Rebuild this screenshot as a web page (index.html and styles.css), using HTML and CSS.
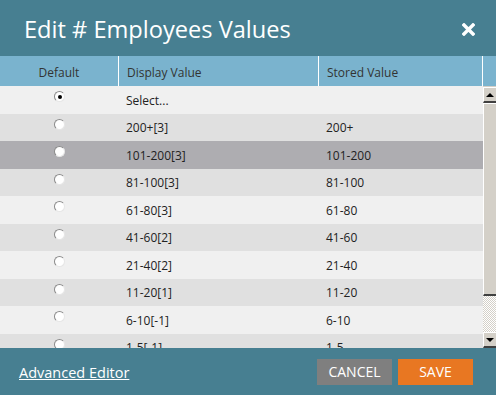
FILE: index.html
```html
<!DOCTYPE html>
<html lang="en">
  <head>
    <meta charset="UTF-8" />
    <title>Edit # Employees Values</title>
    <link rel="stylesheet" href="styles.css">
  </head>
  <body>
    <div class="dialog">
      <!-- title bar -->
      <div class="dialog-head">
        <h1>Edit # Employees Values</h1>
        <span class="close-btn">
          <svg width="13" height="13" viewBox="0 0 13 13">
            <path d="M2 2 L11 11 M11 2 L2 11" stroke="#fff" stroke-width="3.4" stroke-linecap="square" />
          </svg>
        </span>
      </div>

      <!-- column titles -->
      <div class="grid-head">
        <div class="col-default">Default</div>
        <div class="col-display">Display Value</div>
        <div class="col-stored">Stored Value</div>
        <div class="col-pad"></div>
      </div>

      <!-- values -->
      <div class="grid-body">
        <div class="rows">
          <div class="row"><div class="col-default"><span class="radio checked"></span></div><div class="col-display">Select...</div><div class="col-stored"></div></div>
          <div class="row"><div class="col-default"><span class="radio"></span></div><div class="col-display">200+[3]</div><div class="col-stored">200+</div></div>
          <div class="row selected"><div class="col-default"><span class="radio"></span></div><div class="col-display">101-200[3]</div><div class="col-stored">101-200</div></div>
          <div class="row"><div class="col-default"><span class="radio"></span></div><div class="col-display">81-100[3]</div><div class="col-stored">81-100</div></div>
          <div class="row"><div class="col-default"><span class="radio"></span></div><div class="col-display">61-80[3]</div><div class="col-stored">61-80</div></div>
          <div class="row"><div class="col-default"><span class="radio"></span></div><div class="col-display">41-60[2]</div><div class="col-stored">41-60</div></div>
          <div class="row"><div class="col-default"><span class="radio"></span></div><div class="col-display">21-40[2]</div><div class="col-stored">21-40</div></div>
          <div class="row"><div class="col-default"><span class="radio"></span></div><div class="col-display">11-20[1]</div><div class="col-stored">11-20</div></div>
          <div class="row"><div class="col-default"><span class="radio"></span></div><div class="col-display">6-10[-1]</div><div class="col-stored">6-10</div></div>
          <div class="row"><div class="col-default"><span class="radio"></span></div><div class="col-display">1-5[-1]</div><div class="col-stored">1-5</div></div>
        </div>
        <div class="scrollbar">
          <div class="sb-btn sb-up"><span class="arrow-up"></span></div>
          <div class="sb-thumb"></div>
          <div class="sb-track"></div>
          <div class="sb-btn sb-down"><span class="arrow-down"></span></div>
        </div>
      </div>

      <!-- actions -->
      <div class="dialog-foot">
        <a class="adv-link" href="#">Advanced Editor</a>
        <div class="actions">
          <button class="btn btn-cancel">CANCEL</button>
          <button class="btn btn-save">SAVE</button>
        </div>
      </div>
    </div>
  </body>
</html>
```

FILE: styles.css
```css
body {
  margin: 0;
  font-family: "Open Sans", Arial, sans-serif;
  background: #ffffff;
}

.dialog {
  width: 496px;
  height: 395px;
  display: flex;
  flex-direction: column;
  background: #477f91;
  overflow: hidden;
}

/* title bar */
.dialog-head {
  height: 56px;
  flex: none;
  display: flex;
  align-items: center;
  justify-content: space-between;
  padding: 0 21px 0 24px;
  box-sizing: border-box;
}
.dialog-head h1 {
  margin: 0;
  font-size: 23.6px;
  font-weight: normal;
  color: #ffffff;
  position: relative;
  top: 1px;
}
.close-btn {
  display: flex;
  width: 13px;
  height: 13px;
  margin-top: 2px;
}

/* columns */
.col-default {
  width: 118px;
  flex: none;
  display: flex;
  justify-content: center;
  align-items: center;
}
.col-display {
  width: 200px;
  flex: none;
  padding-left: 8px;
  box-sizing: border-box;
}
.col-stored {
  width: 164px;
  flex: none;
  padding-left: 8px;
  box-sizing: border-box;
}

.grid-head {
  height: 30px;
  flex: none;
  display: flex;
  align-items: stretch;
  background: #7ab3ce;
  font-size: 12px;
  color: #333333;
}
.grid-head > div {
  display: flex;
  align-items: center;
  padding-top: 2px;
  box-sizing: border-box;
}
.grid-head .col-default,
.grid-head .col-display,
.grid-head .col-stored {
  border-right: 1px solid #ffffff;
}
.grid-head .col-default {
  width: 119px;
}
.grid-head .col-display {
  width: 200px;
}
.grid-head .col-stored {
  width: 164px;
}

/* rows */
.grid-body {
  height: 262px;
  flex: none;
  display: flex;
  overflow: hidden;
}
.rows {
  width: 483px;
  flex: none;
}
.row {
  height: 27.5px;
  display: flex;
  align-items: center;
  font-size: 12px;
  color: #222222;
  background: #f0f0f0;
}
.row:nth-child(even) {
  background: #e0e0e0;
}
.row.selected {
  background: #aeadb1;
}
.row .col-display,
.row .col-stored {
  padding-top: 1px;
}

.radio {
  display: block;
  width: 11px;
  height: 11px;
  border-radius: 50%;
  background: #ffffff;
  border: 1px solid #8a8a8a;
  border-bottom-color: #e6e6e6;
  border-right-color: #e6e6e6;
  box-sizing: border-box;
  position: relative;
  top: -3px;
  left: 0px;
}
.radio.checked::after {
  content: "";
  position: absolute;
  left: 3px;
  top: 3px;
  width: 4px;
  height: 4px;
  border-radius: 50%;
  background: #000000;
}

/* classic scrollbar */
.scrollbar {
  width: 13px;
  flex: none;
  display: flex;
  flex-direction: column;
  background: #d4d0c8;
}
.sb-btn {
  height: 16px;
  flex: none;
  display: flex;
  align-items: center;
  justify-content: center;
  background: #d4d0c8;
  border-top: 1px solid #ffffff;
  border-left: 1px solid #ffffff;
  border-bottom: 2px solid #404040;
  box-sizing: border-box;
}
.sb-up {
  margin-top: 1px;
}
.arrow-up {
  width: 0;
  height: 0;
  border-left: 4px solid transparent;
  border-right: 4px solid transparent;
  border-bottom: 4px solid #000000;
}
.arrow-down {
  width: 0;
  height: 0;
  border-left: 4px solid transparent;
  border-right: 4px solid transparent;
  border-top: 4px solid #000000;
}
.sb-thumb {
  height: 193px;
  flex: none;
  background: #d4d0c8;
  border-top: 1px solid #ffffff;
  border-left: 1px solid #ffffff;
  border-bottom: 2px solid #404040;
  box-sizing: border-box;
}
.sb-track {
  flex: 1;
  background-color: #ffffff;
  background-image: repeating-conic-gradient(#d4d0c8 0 25%, #ffffff 0 50%);
  background-size: 2px 2px;
}

/* footer */
.dialog-foot {
  flex: 1;
  display: flex;
  align-items: center;
  justify-content: space-between;
  padding: 0 23px 0 19px;
}
.adv-link {
  color: #ffffff;
  font-size: 14.5px;
  text-decoration: underline;
  position: relative;
  top: 1px;
}
.actions {
  display: flex;
  gap: 6px;
}
.btn {
  width: 75px;
  height: 26px;
  border: none;
  font-family: "Open Sans", Arial, sans-serif;
  font-size: 14px;
  color: #ffffff;
  padding: 0;
  cursor: pointer;
}
.btn-cancel {
  background: #7f7f7f;
}
.btn-save {
  background: #e87722;
}
```
